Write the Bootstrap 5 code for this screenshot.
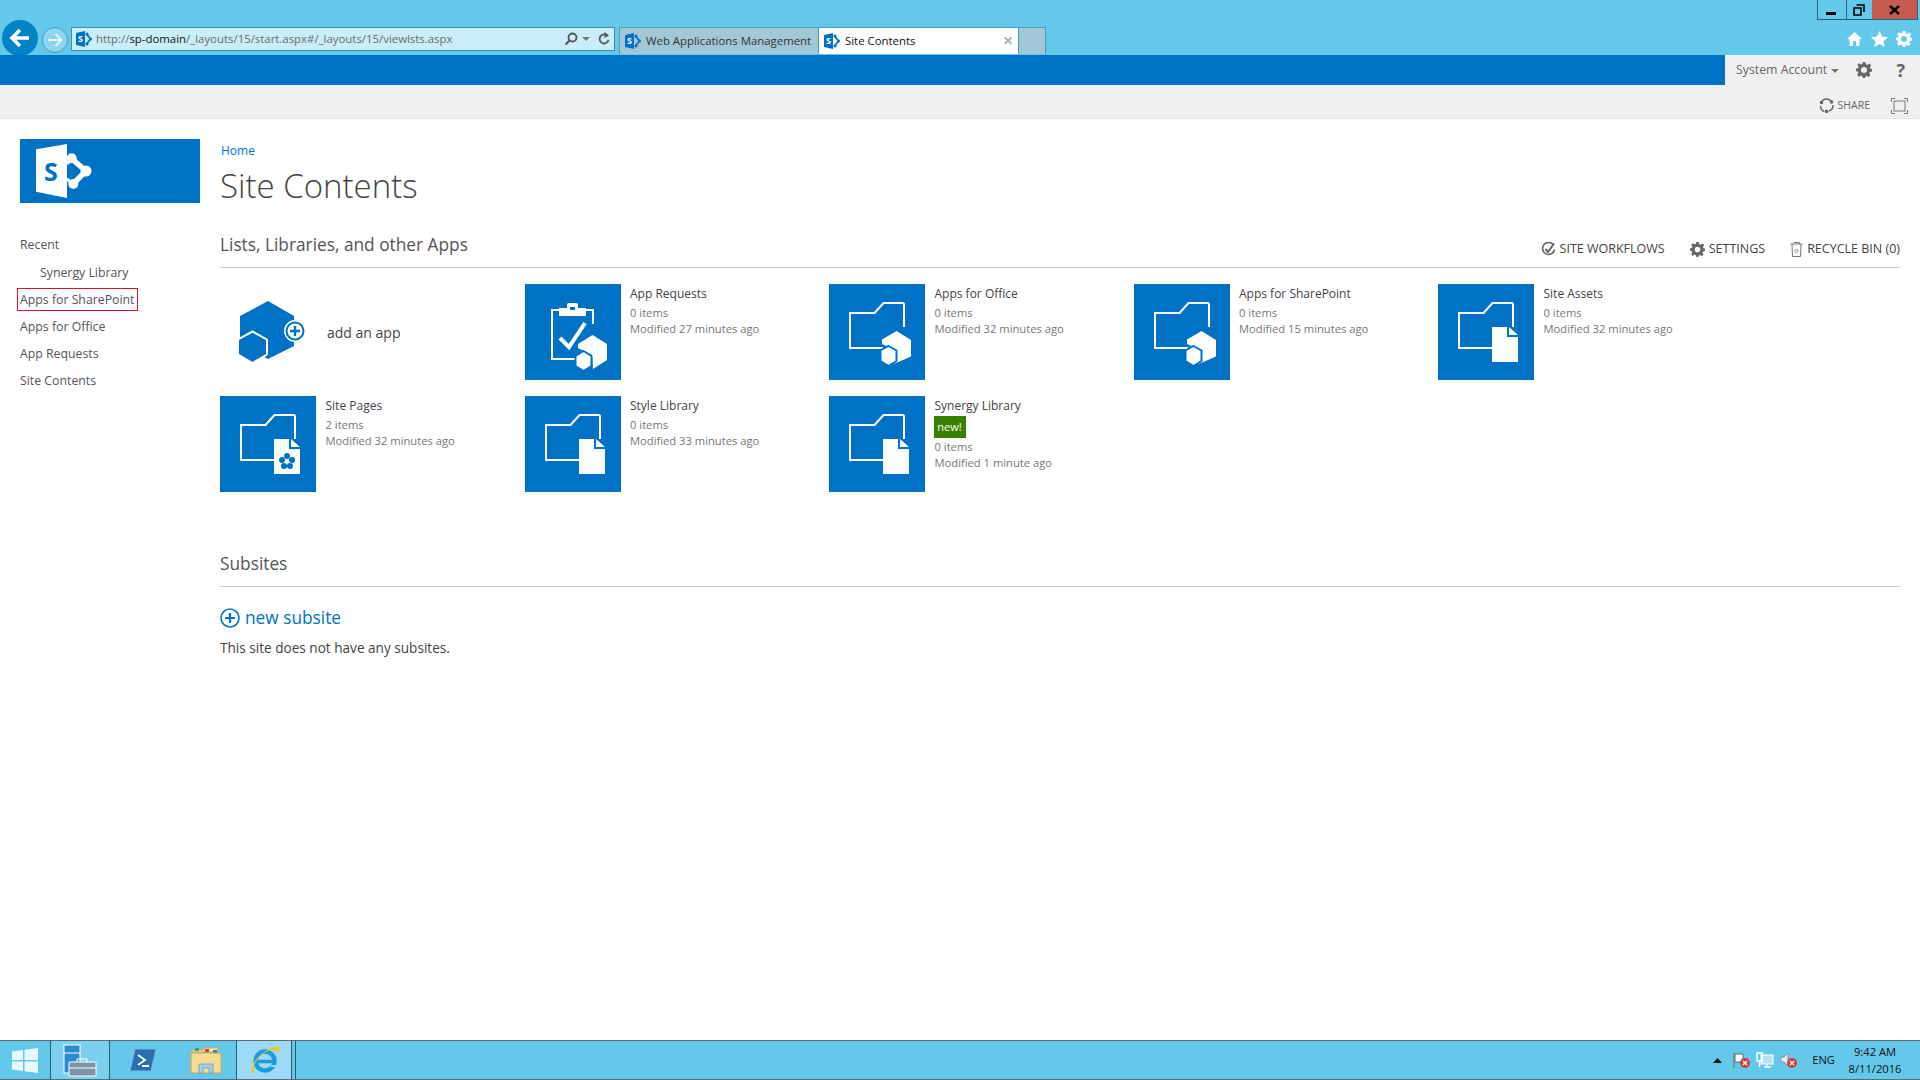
<!DOCTYPE html>
<html lang="en">
<head>
<meta charset="utf-8">
<title>Site Contents</title>
<link href="https://cdn.jsdelivr.net/npm/bootstrap@5.3.0/dist/css/bootstrap.min.css" rel="stylesheet">
<style>
html,body{height:1080px;overflow:hidden}
body{font-family:"Open Sans","Liberation Sans",sans-serif;font-size:12px;color:#444;background:#fff;width:1920px;display:flex;flex-direction:column}
a{color:inherit;text-decoration:none}
.chrome{height:55px;background:#64c8ea;flex:none;overflow:hidden}
.winrow{height:27px}
.winbtns{height:20px;margin-right:2px;border:1px solid #2b5f72;border-top:0}
.winb{height:19px;display:flex;align-items:center;justify-content:center}
.winb+.winb{border-left:1px solid #2b5f72}
.wb-min{width:28px;padding-right:2px}.wb-max{width:26px;padding-right:2px}.wb-close{width:45px;background:#c75b50;border:0!important}
.navrow{height:28px}
.backbtn{width:36px;height:36px;margin:-7px 0 0 2px;border-radius:50%;background:#0083c4;flex:none}
.fwdbtn{width:26px;height:26px;margin:-2px 3px 0 4px;border-radius:50%;border:1px solid #3f9cb8;background:#8ed6ee;flex:none}
.addr{width:544px;height:24px;background:#c9eef9;border:1px solid #3f8ea8;padding:0 4px;font-size:11.4px;color:#6a6a6a;flex:none;align-self:flex-start}
.addr b{font-weight:400;color:#111}
.addr .favi{margin-right:4px}
.tabgroup{margin-left:4px;height:27px;align-self:flex-start}
.brtab{background:#a2c8d8;border:1px solid #4c9ab2;border-bottom:0;font-size:11.4px;color:#333;padding:0 5px;height:27px;width:200px;margin-left:-1px}
.brtab.on{background:#fff;color:#111;border-color:#4c9ab2;width:201px}
.brtab.stub{width:28px}
.brtab .favi{margin-right:5px}
.closex{margin-left:auto;color:#aaa;font-size:12px;font-weight:700;margin-right:0}
.tools{gap:8px;margin-right:8px;margin-top:-4px;margin-left:auto}
.favi{width:16px;height:16px;flex:none}
.suite{height:30px;flex:none;background:#0072c6}
.suite-r{width:195px;background:#f0f0f0;color:#666;font-size:12.3px;padding-left:11px}
.caret{width:0;height:0;border:4px solid transparent;border-top-color:#777;border-bottom:0;margin:2px 0 0 4px}
.ribbonb{height:34px;flex:none;background:#f0f0f0;border-bottom:1px solid #e2e2e2;color:#666;font-size:10.5px;padding:8px 12px 0 0}
.pagebody{flex:1 1 auto;min-height:0}
.sidenav{width:220px;flex:none;padding:20px 0 0 20px}
.logobox{width:180px;height:64px;background:#0072c6;margin-bottom:29px;display:block}
.snav a{height:27.2px;display:flex;align-items:center;font-size:12.3px;color:#555}
.snav a.sub{padding-left:20px}
.snav a .boxed{outline:1px solid #d6132a;padding:2px 2px;margin-left:-2px;line-height:17px}
.mainarea{flex:1 1 auto;padding:23px 20px 0 0;min-width:0}
.crumb{font-size:12px;color:#0072c6;height:21px;line-height:18px;padding-left:1px}
.pagetitle{font-size:33px;font-weight:300;color:#444;line-height:46px;margin:0;height:46px}
.secthead{height:33px;border-bottom:1px solid #c6c6c6;margin-top:26px;padding-bottom:10px}
.secthead.two{margin-top:0;height:38px}
.secttitle{font-size:17.3px;color:#555;line-height:24px;margin:0;font-weight:400}
.actions{font-size:12.5px;color:#444;gap:25px;margin-bottom:-2px}
.tilegrid{display:grid;grid-template-columns:repeat(5,304.5px);grid-auto-rows:96px;row-gap:16px;margin-top:16px}
.apptile{display:flex;min-width:0}
.tileico{width:96px;height:96px;background:#0072c6;flex:none;display:block}
.tiletext{padding:1px 0 0 9.5px;font-size:11.2px;color:#777;line-height:16px}
.tiletext h3{font-size:12px;font-weight:400;color:#444;margin:0 0 2px;line-height:18px}
.newtag{background:#3a8000;color:#fff;display:inline-block;width:32px;height:22px;line-height:22px;text-align:center;font-size:11px;margin:1px 0 0 -1px;vertical-align:top}
.itemline{display:block}
.itemgap{margin-top:1px}
.addtext{font-size:14px;color:#444;margin-left:22px}
.gaprow{height:57px}
.newsub{font-size:17.3px;color:#0072c6;line-height:26px;margin-top:18px;gap:5px}
.nosub{font-size:13.6px;color:#444;margin-top:8px;line-height:18px}
.taskbar{height:40px;flex:none;background:#64c8ea;border-top:1px solid #5d6a70;border-bottom:1px solid #5d6a70}
.tb{height:100%;display:flex;align-items:center;justify-content:center;flex:none}
.tb-start{width:51px;border-right:1px solid #2d5d6d}
.tb-srv{width:59px;background:#7ad0ee;border-right:1px solid #2d5d6d}
.tb-ps{width:60px;padding-left:6px}.tb-ex{width:67px;padding-left:5px;border-right:1px solid #2d5d6d}
.tb-ie{width:55px;padding-left:2px;background:#9edaf5;border-right:1px solid #2d5d6d}
.tb-end{width:4px;border-right:1px solid #2d5d6d}
.tray{margin-left:auto;font-size:11.2px;color:#111;height:100%}
.clock{width:56px;margin-right:17px;text-align:center;line-height:17px}
.eng{margin:0 12px 0 14px}
.chromegear{--gh:#64c8ea}
.suitegear{--gh:#f0f0f0;color:#666;margin-right:24px}
.helpq{font-size:18px;color:#666;margin-right:15px;line-height:18px}
.focusic{margin-left:21px}
.actgear{color:#666}
.addic{margin-left:19px;flex:none}
.trayarrow{margin-right:11px}
.trayic{margin-right:5.8px}
</style>
</head>
<body>
<svg class="d-none" aria-hidden="true">
  <symbol id="spfav" viewBox="0 0 16 16">
    <path d="M0 2 9 0V16L0 14Z" fill="#0072c6"/>
    <text x="4.5" y="11" text-anchor="middle" font-family="Open Sans, sans-serif" font-size="9" font-weight="700" fill="#fff">S</text>
    <path d="M10.500 3 14.500 8 10.500 13" fill="none" stroke="#0072c6" stroke-width="1.800"/>
    <circle cx="11" cy="3" r="1.600" fill="#0072c6"/><circle cx="14.500" cy="8" r="1.500" fill="#0072c6"/><circle cx="11" cy="13" r="1.600" fill="#0072c6"/>
  </symbol>
  <symbol id="folder" viewBox="0 0 96 96">
    <path d="M54 64H21V29H46M45.5 29 54.5 19H73.5Q75 19 75 20.5V43" fill="none" stroke="#fff" stroke-width="2"/>
  </symbol>
  <symbol id="doc" viewBox="0 0 96 96">
    <path d="M54 43H69V53H80V78H54Z" fill="#fbfdff"/><path d="M71 43 80 51H71Z" fill="#fbfdff"/>
  </symbol>
  <symbol id="hexes" viewBox="0 0 96 96">
    <path d="M53 60 67.500 66.500V76L60 82 82 72.500V56L67.500 47 53 55.500Z" fill="#fff"/>
    <path d="M59.500 62 67.500 66.500V77L59.500 82 51.500 77V66.500Z" fill="#fff" stroke="#0072c6" stroke-width="2"/>
  </symbol>
  <symbol id="gearic" viewBox="0 0 16 16">
    <path d="M6.600 0H9.400L9.800 2.300 11.300 2.900 13.200 1.500 15.200 3.500 13.800 5.400 14.300 6.700 16 7V9.600L13.900 10 13.300 11.400 14.500 13.200 12.600 15.100 10.800 13.900 9.400 14.400 9 16H6.800L6.300 14.100 4.800 13.500 3 14.800 1.100 12.900 2.400 11.100 1.900 9.600 0 9.300V6.700L2 6.300 2.600 4.900 1.300 3.100 3.200 1.200 5 2.500 6.300 2Z" fill="currentColor"/>
    <circle cx="8" cy="8" r="3" fill="var(--gh,#fff)"/>
  </symbol>
</svg>

<header class="chrome">
  <div class="winrow d-flex justify-content-end">
    <div class="winbtns d-flex">
      <div class="winb wb-min"><svg width="12" height="12" viewBox="0 0 12 12"><rect x="1" y="8" width="10" height="3" fill="#000"/></svg></div>
      <div class="winb wb-max"><svg width="12" height="12" viewBox="0 0 12 12"><path d="M3.500 1H11V8M1 4H8V11H1Z" fill="none" stroke="#000" stroke-width="1.600"/></svg></div>
      <div class="winb wb-close"><svg width="11" height="10" viewBox="0 0 11 10"><path d="M1 1 10 9M10 1 1 9" stroke="#000" stroke-width="2.400"/></svg></div>
    </div>
  </div>
  <div class="navrow d-flex align-items-center">
    <div class="backbtn d-flex align-items-center justify-content-center"><svg width="22" height="20" viewBox="0 0 22 20"><path d="M20 10H4M11 2 3 10 11 18" fill="none" stroke="#fff" stroke-width="3.600"/></svg></div>
    <div class="fwdbtn d-flex align-items-center justify-content-center"><svg width="16" height="14" viewBox="0 0 16 14"><path d="M1 7H14M8.500 1 14.500 7 8.500 13" fill="none" stroke="#e8f8fc" stroke-width="1.800"/></svg></div>
    <div class="addr d-flex align-items-center">
      <svg class="favi"><use href="#spfav"/></svg>
      <span>http://<b>sp-domain</b>/_layouts/15/start.aspx#/_layouts/15/viewlsts.aspx</span>
      <span class="ms-auto d-flex align-items-center gap-1">
        <svg width="14" height="14" viewBox="0 0 14 14"><circle cx="8.500" cy="5.500" r="4" fill="none" stroke="#555" stroke-width="1.800"/><path d="M5.500 8.500 1.500 12.500" stroke="#555" stroke-width="2.200"/></svg>
        <span class="caret m-0"></span>
        <svg class="ms-1" width="12" height="14" viewBox="0 0 12 14"><path d="M9.500 4A4.500 4.500 0 1 0 10.500 8" fill="none" stroke="#555" stroke-width="1.800"/><path d="M6.500 0 11 3.500 6.500 6Z" fill="#555"/></svg>
      </span>
    </div>
    <div class="tabgroup d-flex">
      <div class="brtab d-flex align-items-center ms-0"><svg class="favi"><use href="#spfav"/></svg><span>Web Applications Management</span></div>
      <div class="brtab on d-flex align-items-center"><svg class="favi"><use href="#spfav"/></svg><span>Site Contents</span><span class="closex">✕</span></div>
      <div class="brtab stub"></div>
    </div>
    <div class="tools d-flex align-items-center">
      <svg width="17" height="16" viewBox="0 0 17 16"><path d="M8.500 1 1 8H3.500V15H7V10H10V15H13.500V8H16Z" fill="#fff"/></svg>
      <svg width="17" height="16" viewBox="0 0 17 16"><path d="M8.500 0 11 5.500 17 6.200 12.500 10.200 13.800 16 8.500 13 3.200 16 4.500 10.200 0 6.200 6 5.500Z" fill="#fff"/></svg>
      <svg width="16" height="16" class="text-white chromegear"><use href="#gearic"/></svg>
    </div>
  </div>
</header>

<div class="suite d-flex justify-content-end">
  <div class="suite-r d-flex align-items-center">
    <span>System Account</span><span class="caret"></span>
    <svg class="ms-auto suitegear" width="16" height="16"><use href="#gearic"/></svg>
    <span class="fw-bold helpq">?</span>
  </div>
</div>

<div class="ribbonb d-flex justify-content-end align-items-center">
  <svg width="15" height="15" viewBox="0 0 15 15"><path d="M3 3A6 6 0 0 1 12 3M14 7A6 6 0 0 1 10 13M5 13.500A6 6 0 0 1 1.500 8" fill="none" stroke="#666" stroke-width="1.500"/><circle cx="2.500" cy="4.500" r="1.800" fill="#666"/><circle cx="12.500" cy="4" r="1.800" fill="#666"/><circle cx="7.500" cy="13.300" r="1.800" fill="#666"/></svg>
  <span class="ms-1">SHARE</span>
  <svg class="focusic" width="17" height="16" viewBox="0 0 17 16"><rect x="3" y="3" width="11" height="10" fill="none" stroke="#777"/><path d="M.5 4V.5H4M13 .5H16.500V4M16.500 12V15.500H13M4 15.500H.5V12" fill="none" stroke="#777"/></svg>
</div>

<div class="pagebody d-flex">
  <aside class="sidenav">
    <a class="logobox" href="#" aria-label="SharePoint">
      <svg width="180" height="64" viewBox="0 0 180 64">
        <path d="M16 10.300 47 5V59L16 52.700Z" fill="#fff"/>
        <text x="31" y="41.700" text-anchor="middle" font-family="Open Sans, sans-serif" font-size="25" font-weight="700" fill="#0072c6">S</text>
        <path d="M51.500 19.500 66 32 53 45" fill="none" stroke="#fff" stroke-width="5.500"/>
        <path d="M47 25 51.500 19.500M47 40 53 45" stroke="#fff" stroke-width="3"/>
        <circle cx="51.700" cy="19.300" r="5" fill="#fff"/><circle cx="66" cy="32" r="5.500" fill="#fff"/><circle cx="53.300" cy="45" r="5" fill="#fff"/>
      </svg>
    </a>
    <nav class="snav nav flex-column">
      <a href="#">Recent</a>
      <a href="#" class="sub">Synergy Library</a>
      <a href="#"><span class="boxed">Apps for SharePoint</span></a>
      <a href="#">Apps for Office</a>
      <a href="#">App Requests</a>
      <a href="#">Site Contents</a>
    </nav>
  </aside>

  <main class="mainarea">
    <div class="crumb"><a href="#">Home</a></div>
    <h1 class="pagetitle">Site Contents</h1>

    <div class="secthead d-flex justify-content-between align-items-end">
      <h2 class="secttitle">Lists, Libraries, and other Apps</h2>
      <div class="actions d-flex align-items-center">
        <a href="#" class="d-flex align-items-center gap-1">
          <svg width="15" height="15" viewBox="0 0 15 15"><path d="M12.500 3A6 6 0 1 0 13.500 7.500" fill="none" stroke="#666" stroke-width="1.600"/><path d="M4.500 7 7 10 13 1.500" fill="none" stroke="#666" stroke-width="2"/></svg>
          <span>SITE WORKFLOWS</span></a>
        <a href="#" class="d-flex align-items-center gap-1"><svg width="15" height="15" class="actgear"><use href="#gearic"/></svg><span>SETTINGS</span></a>
        <a href="#" class="d-flex align-items-center gap-1"><svg width="13" height="15" viewBox="0 0 13 15"><path d="M.5 2H12.500M2 2 2.500 14.500H10.500L11 2M3.500 .5H9.500V2" fill="none" stroke="#777"/><circle cx="6.500" cy="9" r="1.600" fill="none" stroke="#999"/></svg><span>RECYCLE BIN (0)</span></a>
      </div>
    </div>

    <div class="tilegrid">
      <a href="#" class="apptile align-items-center">
        <svg class="addic" width="66" height="62" viewBox="239 302 66 62">
          <path d="M268 302 294 317V347L268 360 240 345V317Z" fill="#0072c6"/>
          <path d="M252.500 332.500 267 340.500V355.500L252.500 364 238 355.500V340.500Z" fill="#0072c6" stroke="#fff" stroke-width="2"/>
          <circle cx="295" cy="332" r="11" fill="#fff"/>
          <circle cx="295" cy="332" r="8.500" fill="#fff" stroke="#0072c6" stroke-width="2"/>
          <path d="M295 327V337M290 332H300" stroke="#0072c6" stroke-width="2.400"/>
        </svg>
        <span class="addtext">add an app</span>
      </a>

      <a href="#" class="apptile">
        <svg class="tileico" viewBox="0 0 96 96">
          <path d="M54 75H27V26H35M61 26H68V40" fill="none" stroke="#fff" stroke-width="2"/>
          <path d="M34 24H42V21Q42 19 44 19H51Q53 19 53 21V24H61V32H34Z" fill="#fff"/><rect x="45" y="23" width="5" height="3" fill="#0072c6"/>
          <path d="M35 54 44 63 60 39" fill="none" stroke="#fff" stroke-width="4"/>
          <path d="M67.500 51 82 60V76L68 85 67 71 53 64V60Z" fill="#fff"/>
          <path d="M58.500 67 66.500 72V82L58.500 87 50.500 82V72Z" fill="#fff" stroke="#0072c6" stroke-width="2"/>
        </svg>
        <div class="tiletext"><h3>App Requests</h3><span class="itemline">0 items</span><span class="itemline">Modified 27 minutes ago</span></div>
      </a>

      <a href="#" class="apptile">
        <svg class="tileico" viewBox="0 0 96 96"><use href="#folder"/><use href="#hexes"/></svg>
        <div class="tiletext"><h3>Apps for Office</h3><span class="itemline">0 items</span><span class="itemline">Modified 32 minutes ago</span></div>
      </a>

      <a href="#" class="apptile">
        <svg class="tileico" viewBox="0 0 96 96"><use href="#folder"/><use href="#hexes"/></svg>
        <div class="tiletext"><h3>Apps for SharePoint</h3><span class="itemline">0 items</span><span class="itemline">Modified 15 minutes ago</span></div>
      </a>

      <a href="#" class="apptile">
        <svg class="tileico" viewBox="0 0 96 96"><use href="#folder"/><use href="#doc"/></svg>
        <div class="tiletext"><h3>Site Assets</h3><span class="itemline">0 items</span><span class="itemline">Modified 32 minutes ago</span></div>
      </a>

      <a href="#" class="apptile">
        <svg class="tileico" viewBox="0 0 96 96"><use href="#folder"/><use href="#doc"/>
          <g fill="#0072c6"><circle cx="67" cy="60" r="3"/><circle cx="62" cy="64" r="3"/><circle cx="72" cy="64" r="3"/><circle cx="64" cy="70" r="3"/><circle cx="70" cy="70" r="3"/></g><circle cx="67" cy="65.500" r="1.800" fill="#fff"/>
        </svg>
        <div class="tiletext"><h3>Site Pages</h3><span class="itemline">2 items</span><span class="itemline">Modified 32 minutes ago</span></div>
      </a>

      <a href="#" class="apptile">
        <svg class="tileico" viewBox="0 0 96 96"><use href="#folder"/><use href="#doc"/></svg>
        <div class="tiletext"><h3>Style Library</h3><span class="itemline">0 items</span><span class="itemline">Modified 33 minutes ago</span></div>
      </a>

      <a href="#" class="apptile">
        <svg class="tileico" viewBox="0 0 96 96"><use href="#folder"/><use href="#doc"/></svg>
        <div class="tiletext"><h3 class="mb-0">Synergy Library</h3><span class="newtag">new!</span><span class="itemline itemgap">0 items</span><span class="itemline">Modified 1 minute ago</span></div>
      </a>
    </div>

    <div class="gaprow"></div>
    <div class="secthead two d-flex align-items-end">
      <h2 class="secttitle">Subsites</h2>
    </div>
    <a href="#" class="newsub d-flex align-items-center">
      <svg width="20" height="20" viewBox="0 0 20 20"><circle cx="10" cy="10" r="9" fill="none" stroke="#0072c6" stroke-width="1.600"/><path d="M10 5V15M5 10H15" stroke="#0072c6" stroke-width="2.200"/></svg>
      <span>new subsite</span>
    </a>
    <div class="nosub">This site does not have any subsites.</div>
  </main>
</div>

<footer class="taskbar d-flex">
  <div class="tb tb-start"><svg width="28" height="27" viewBox="0 0 28 27"><g fill="#fff" fill-opacity=".85"><path d="M1 4.500 12 3V13H1Z"/><path d="M13.500 2.800 27 1V13H13.500Z"/><path d="M1 14.500H12V24L1 22.500Z"/><path d="M13.500 14.500H27V26L13.500 24.200Z"/></g></svg></div>
  <div class="tb tb-srv"><svg width="34" height="33" viewBox="0 0 34 33"><rect x="1" y="1" width="16" height="28" fill="#2a8ad4" stroke="#fff"/><path d="M1 9H17" stroke="#fff"/><rect x="6" y="18" width="27" height="14" rx="1" fill="#7c94a4" stroke="#fff"/><path d="M14 18V15H24V18M6 24H33" fill="none" stroke="#fff"/></svg></div>
  <div class="tb tb-ps"><svg width="28" height="24" viewBox="0 0 28 24"><path d="M6 1H27L22 23H1Z" fill="#2a6fb0" stroke="#7fb4dc"/><path d="M9 7 16 12 9 17M13 18H20" fill="none" stroke="#fff" stroke-width="1.800"/></svg></div>
  <div class="tb tb-ex"><svg width="32" height="28" viewBox="0 0 32 28"><path d="M2 6V4H14V2H28V6Z" fill="#f7e6a8" stroke="#c9a860"/><rect x="5" y="2" width="4" height="3" fill="#3aa64a"/><rect x="15" y="3" width="4" height="3" fill="#d8432f"/><rect x="23" y="4" width="4" height="3" fill="#2f7fd0"/><path d="M1 7H31V27H1Z" fill="#f5dc8f" stroke="#c9a860"/><path d="M9 27V18H23V27H19V22H13V27Z" fill="#9ed3e8" stroke="#5aa0c0" stroke-width=".8"/></svg></div>
  <div class="tb tb-ie"><svg width="30" height="31" viewBox="0 0 30 31"><circle cx="15" cy="16" r="9.500" fill="none" stroke="#1d9be0" stroke-width="4.500"/><path d="M7 16.500H24" stroke="#1d9be0" stroke-width="3.500"/><path d="M21 20H27V22H21Z" fill="#9edaf5"/><path d="M2 27C-1 22 10 5 27 1.500 31 1 29 6 27 9 28 3 20 4 14 8 6 14 1 24 5 27 3 29 2 28 2 27Z" fill="#f5c21a"/></svg></div>
  <div class="tb tb-end"></div>
  <div class="tray d-flex align-items-center">
    <svg class="trayarrow" width="9" height="5" viewBox="0 0 9 5"><path d="M4.500 0 9 5H0Z" fill="#111"/></svg>
    <svg class="trayic" width="18" height="17" viewBox="0 0 18 17"><path d="M1 1V16M2 2H10V10H2Z" fill="#fff" stroke="#5a6a70"/><circle cx="12" cy="11" r="5" fill="#d93a3a"/><path d="M10 9 14 13M14 9 10 13" stroke="#fff" stroke-width="1.400"/></svg>
    <svg class="trayic" width="18" height="17" viewBox="0 0 18 17"><rect x="5" y="3" width="12" height="9" fill="#b6e3f2" stroke="#fff"/><path d="M8 15H15M11 12V15" stroke="#fff" stroke-width="1.500"/><rect x="1" y="1" width="5" height="8" fill="none" stroke="#fff" stroke-width="1.500"/><path d="M3.500 9V15" stroke="#fff" stroke-width="1.500"/></svg>
    <svg width="18" height="17" viewBox="0 0 18 17"><path d="M1 5H4L8 1V14L4 10H1Z" fill="#dfe9ee" stroke="#7b8a90" stroke-width=".8"/><circle cx="12" cy="11" r="5" fill="#d93a3a"/><path d="M10 9 14 13M14 9 10 13" stroke="#fff" stroke-width="1.400"/></svg>
    <span class="eng">ENG</span>
    <div class="clock"><div>9:42 AM</div><div>8/11/2016</div></div>
  </div>
</footer>
<script src="https://cdn.jsdelivr.net/npm/bootstrap@5.3.0/dist/js/bootstrap.bundle.min.js"></script>
</body>
</html>
